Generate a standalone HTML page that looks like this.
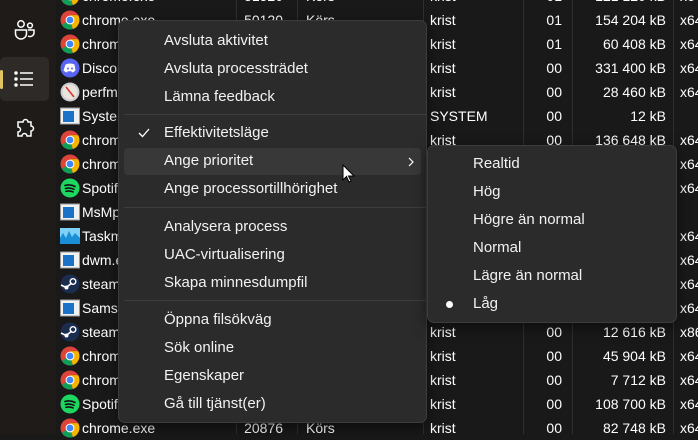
<!DOCTYPE html>
<html><head><meta charset="utf-8"><style>
*{margin:0;padding:0;box-sizing:border-box}
body{width:698px;height:434px;overflow:hidden;background:#191919;font-family:"Liberation Sans",sans-serif;font-size:14px;color:#fff;position:relative}
.side{position:absolute;left:0;top:0;width:56px;height:434px;background:#1f1b18}
.sel{position:absolute;left:0;top:57px;width:49px;height:44px;background:#2e2a27;border-radius:5px}
.ind{position:absolute;left:0;top:70px;width:3px;height:19px;background:#e2c461;border-radius:2px}
.row{position:absolute;left:56px;width:642px;height:24px;line-height:24px;white-space:nowrap}
.row span{position:absolute;top:0}
.ic{position:absolute;left:4px;top:2px;width:20px;height:20px}
.vl{position:absolute;top:0;width:1px;height:434px;background:#2f2f2f}
.menu{position:absolute;background:#2b2b2b;border:1px solid #3c3c3c;border-radius:7px;box-shadow:0 4px 14px rgba(0,0,0,.5)}
.mi{position:absolute;left:45px;height:20px;line-height:20px;white-space:nowrap;color:#f2f2f2;font-size:15px}
.sep{position:absolute;left:5px;right:0;height:1px;background:#3e3e3e}
</style></head><body>
<div class="side">
<svg style="position:absolute;left:13px;top:19px" width="24" height="24" viewBox="0 0 24 24" fill="none" stroke="#fff" stroke-width="1.5"><circle cx="8" cy="5" r="3.2"/><circle cx="17" cy="6.5" r="2.4"/><path d="M2.5 11h11v3.5a5.5 5.5 0 0 1-11 0z"/><path d="M15 11h6v3a4 4 0 0 1-6 3"/></svg>
<div class="sel"></div><div class="ind"></div>
<svg style="position:absolute;left:13px;top:68px" width="22" height="22" viewBox="0 0 22 22" stroke="#fff" stroke-width="1.5"><circle cx="3" cy="5" r="1" fill="#fff"/><circle cx="3" cy="11" r="1" fill="#fff"/><circle cx="3" cy="17" r="1" fill="#fff"/><path d="M7 5h13M7 11h13M7 17h13"/></svg>
<svg style="position:absolute;left:14px;top:117px" width="22" height="24" viewBox="0 0 22 24" fill="none" stroke="#fff" stroke-width="1.5"><path d="M6 5h3a2.5 2.5 0 0 1 5 0h3v4a2.5 2.5 0 0 1 0 5v5h-4a2.5 2.5 0 0 0-5 0H4v-4a2.5 2.5 0 0 0 0-5V5z"/></svg>
</div>

<div class="vl" style="left:236px"></div><div class="vl" style="left:297px"></div><div class="vl" style="left:423px"></div><div class="vl" style="left:523px"></div><div class="vl" style="left:572px"></div><div class="vl" style="left:673px"></div>

<div id="rows"></div>
<script>
var C='<svg class="ic" viewBox="0 0 20 20"><circle cx="10" cy="10" r="9.5" fill="#db4437"/><path d="M10 10 L1.8 14.7 A9.5 9.5 0 0 0 13 19 z" fill="#0f9d58"/><path d="M10 10 L13 19 A9.5 9.5 0 0 0 18.2 5.3 L10 5.3z" fill="#f4b400"/><circle cx="10" cy="10" r="4.4" fill="#fff"/><circle cx="10" cy="10" r="3.4" fill="#4285f4"/></svg>';
var D='<svg class="ic" viewBox="0 0 20 20"><circle cx="10" cy="10" r="9.5" fill="#5865f2"/><path d="M5.5 6.5q4.5-2 9 0l1 6q-1.5 1.5-3.5 2l-.7-1.2h-3.6l-.7 1.2q-2-.5-3.5-2z" fill="#fff"/><circle cx="8" cy="10.5" r="1" fill="#5865f2"/><circle cx="12" cy="10.5" r="1" fill="#5865f2"/></svg>';
var P='<svg class="ic" viewBox="0 0 20 20"><circle cx="10" cy="10" r="9.5" fill="#ccc"/><circle cx="10" cy="10" r="7.5" fill="#e8e4de"/><path d="M6 5l8 10" stroke="#d33" stroke-width="1.6"/></svg>';
var W='<svg class="ic" viewBox="0 0 20 20"><rect x="0.5" y="2" width="19" height="16" fill="#f2f2f2" stroke="#999"/><rect x="3" y="5" width="11" height="11" fill="#1b73c8"/></svg>';
var S='<svg class="ic" viewBox="0 0 20 20"><circle cx="10" cy="10" r="9.5" fill="#1ed760"/><path d="M5 7.5q5.5-1.5 10 1M5.5 10.5q4.5-1.2 8.5.8M6 13.3q3.5-.9 7 .6" stroke="#111" stroke-width="1.6" fill="none" stroke-linecap="round"/></svg>';
var T='<svg class="ic" viewBox="0 0 20 20"><rect y="2" width="20" height="16" fill="#7fd2f5"/><path d="M0 12l3-5 3 5 3-7 3 6 3-4 5 5v6H0z" fill="#1a8fd8"/></svg>';
var ST='<svg class="ic" viewBox="0 0 20 20"><circle cx="10" cy="10" r="9.5" fill="#1b2d4f"/><circle cx="13" cy="7.5" r="2.8" fill="none" stroke="#fff" stroke-width="1.4"/><path d="M1 11l5 2.5 6-4.5" stroke="#fff" stroke-width="1.6" fill="none"/><circle cx="6.5" cy="13.5" r="2" fill="#fff"/></svg>';
var R=[[C,'chrome.exe','51520','Körs','krist','01','121 120 kB','x64'],
[C,'chrome.exe','50120','Körs','krist','01','154 204 kB','x64'],
[C,'chrome.exe','','','krist','01','60 408 kB','x64'],
[D,'Discord.exe','','','krist','00','331 400 kB','x64'],
[P,'perfmon.exe','','','krist','00','28 460 kB','x64'],
[W,'System','','','SYSTEM','00','12 kB',''],
[C,'chrome.exe','','','krist','00','136 648 kB','x64'],
[C,'chrome.exe','','','','','','x64'],
[S,'Spotify.exe','','','','','','x64'],
[W,'MsMpEng.exe','','','','','',''],
[T,'Taskmgr.exe','','','','','','x64'],
[W,'dwm.exe','','','','','','x64'],
[ST,'steam.exe','','','','','','x64'],
[W,'Samsung','','','','','','x64'],
[ST,'steam.exe','','','krist','00','12 616 kB','x86'],
[C,'chrome.exe','','','krist','00','45 904 kB','x64'],
[C,'chrome.exe','','','krist','00','7 712 kB','x64'],
[S,'Spotify.exe','','','krist','00','108 700 kB','x64'],
[C,'chrome.exe','20876','Körs','krist','00','82 748 kB','x64']];
var h='';
R.forEach(function(r,i){var t=-16+24*i;
h+='<div class="row" style="top:'+t+'px">'+r[0]+'<span style="left:26px">'+r[1]+'</span><span style="right:415px">'+r[2]+'</span><span style="left:250px">'+r[3]+'</span><span style="left:374px">'+r[4]+'</span><span style="right:136px">'+r[5]+'</span><span style="right:32px">'+r[6]+'</span><span style="left:624px">'+r[7]+'</span></div>';});
document.getElementById('rows').innerHTML=h;
</script>

<div class="menu" style="left:118px;top:20px;width:309px;height:403px">
<div style="position:absolute;left:5px;top:127px;width:297px;height:27px;background:#383838;border-radius:4px"></div>
<div class="mi" style="top:10px">Avsluta aktivitet</div>
<div class="mi" style="top:38px">Avsluta processträdet</div>
<div class="mi" style="top:66px">Lämna feedback</div>
<div class="sep" style="top:93px"></div>
<svg style="position:absolute;left:19px;top:107px" width="12" height="10" viewBox="0 0 12 10"><path d="M1 5l3.5 3.5L11 1" stroke="#fff" stroke-width="1.3" fill="none"/></svg>
<div class="mi" style="top:102px">Effektivitetsläge</div>
<div class="mi" style="top:130px">Ange prioritet</div>
<svg style="position:absolute;left:288px;top:135px" width="8" height="12" viewBox="0 0 8 12"><path d="M2 2l4 4-4 4" stroke="#fff" stroke-width="1.2" fill="none"/></svg>
<div class="mi" style="top:158px">Ange processortillhörighet</div>
<div class="sep" style="top:186px"></div>
<div class="mi" style="top:196px">Analysera process</div>
<div class="mi" style="top:224px">UAC-virtualisering</div>
<div class="mi" style="top:252px">Skapa minnesdumpfil</div>
<div class="sep" style="top:279px"></div>
<div class="mi" style="top:289px">Öppna filsökväg</div>
<div class="mi" style="top:317px">Sök online</div>
<div class="mi" style="top:345px">Egenskaper</div>
<div class="mi" style="top:373px">Gå till tjänst(er)</div>
</div>

<svg style="position:absolute;left:342px;top:164px" width="14" height="20" viewBox="0 0 14 20"><path d="M1 1v15l3.5-3.5 2.5 5.5 2-1-2.5-5H12z" fill="#fff" stroke="#000" stroke-width="1"/></svg>

<div class="menu" style="left:427px;top:145px;width:250px;height:178px">
<div class="mi" style="top:8px">Realtid</div>
<div class="mi" style="top:36px">Hög</div>
<div class="mi" style="top:64px">Högre än normal</div>
<div class="mi" style="top:92px">Normal</div>
<div class="mi" style="top:120px">Lägre än normal</div>
<div style="position:absolute;left:18px;top:155px;width:7px;height:7px;border-radius:50%;background:#fff"></div>
<div class="mi" style="top:148px">Låg</div>
</div>
</body></html>
